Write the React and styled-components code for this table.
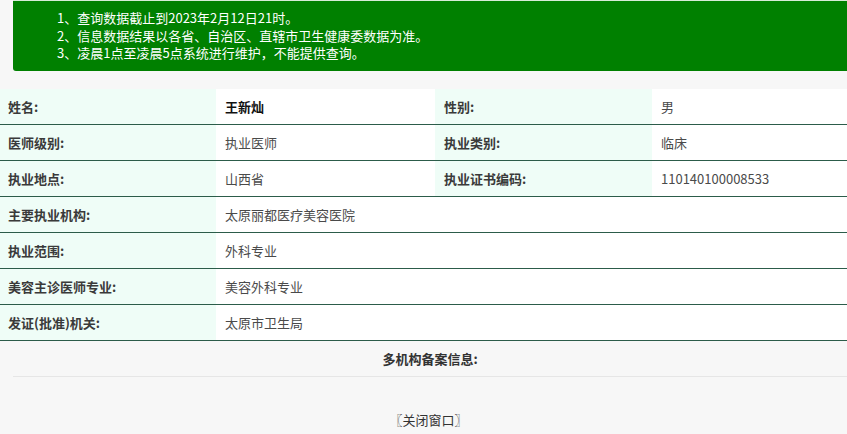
import React from "react";
import styled, { createGlobalStyle } from "styled-components";

const GlobalStyle = createGlobalStyle`
    html, body {
        margin: 0;
        padding: 0;
        background: #f7f7f7;
        font-family: "Noto Sans CJK SC", "Liberation Sans", sans-serif;
        font-size: 13px;
        color: #333;
    }
`;

const notices = [
    "1、查询数据截止到2023年2月12日21时。",
    "2、信息数据结果以各省、自治区、直辖市卫生健康委数据为准。",
    "3、凌晨1点至凌晨5点系统进行维护，不能提供查询。",
];

const rows = [
    [["姓名:", "王新灿", true], ["性别:", "男"]],
    [["医师级别:", "执业医师"], ["执业类别:", "临床"]],
    [["执业地点:", "山西省"], ["执业证书编码:", "110140100008533"]],
    [["主要执业机构:", "太原丽都医疗美容医院"]],
    [["执业范围:", "外科专业"]],
    [["美容主诊医师专业:", "美容外科专业"]],
    [["发证(批准)机关:", "太原市卫生局"]],
];

const Page = styled.div`
    width: 847px;
    min-height: 434px;
    overflow: hidden;
`;

const Notice = styled.div`
    margin: 0 0 0 13px;
    border-top: 1px solid #d6ecd6;
    background: #008000;
    border-radius: 0 0 0 3px;
    color: #fff;
    padding: 8px 0 9px 44px;
    line-height: 17.5px;
    font-size: 13px;
`;

const Table = styled.div`
    margin-top: 18px;
    display: grid;
    grid-template-columns: 216px 219px 217px 1fr;
    background: #f3fcf8;
`;

const Row = styled.div`
    display: contents;
`;

const Cell = styled.div`
    height: 35px;
    border-bottom: 1px solid #2c5c4a;
    display: flex;
    align-items: center;
    padding-left: ${({ $first }) => ($first ? "8px" : "9px")};
    background: ${({ $label }) => ($label ? "#effdf7" : "#fff")};
    grid-column: ${({ $span }) => ($span ? "span 3" : "auto")};
    font-weight: ${({ $label, $strong }) => ($label || $strong ? 700 : 400)};
    color: ${({ $label, $strong }) => ($strong ? "#111" : $label ? "#3a3a3a" : "#4a4a4a")};
`;

const Section = styled.div`
    margin: 0 0 0 13px;
    border-bottom: 1px solid #e6e6e6;
    text-align: center;
    font-weight: 700;
    color: #333;
    padding: 9px 0 9px;
    line-height: 17px;
`;

const Close = styled.div`
    text-align: center;
    margin-top: 33px;
    color: #333;
    padding-left: 10px;
`;

const App = () => (
    <Page>
        <GlobalStyle />
        <Notice>
            {notices.map((n) => (
                <div key={n}>{n}</div>
            ))}
        </Notice>
        <Table>
            {rows.map((row, i) => (
                <Row key={i}>
                    {row.map(([label, value, strong], j) => (
                        <React.Fragment key={label}>
                            <Cell $label $first={j === 0}>{label}</Cell>
                            <Cell $strong={strong} $span={row.length === 1}>{value}</Cell>
                        </React.Fragment>
                    ))}
                </Row>
            ))}
        </Table>
        <Section>多机构备案信息:</Section>
        <Close>〖关闭窗口〗</Close>
    </Page>
);

export default App;
